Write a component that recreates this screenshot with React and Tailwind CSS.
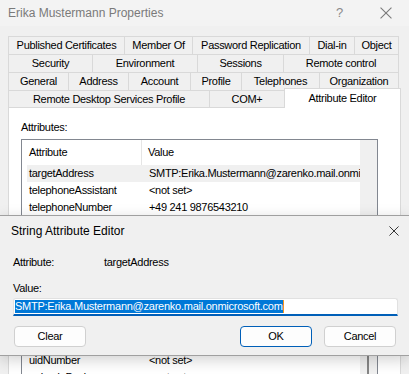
const tabRows = [
  [
    { label: "Published Certificates", w: "w-[116px]" },
    { label: "Member Of", w: "w-[68px]" },
    { label: "Password Replication", w: "w-[117px]" },
    { label: "Dial-in", w: "w-[45px]" },
    { label: "Object", w: "w-[45px]" },
  ],
  [
    { label: "Security", w: "w-[84px]" },
    { label: "Environment", w: "w-[105px]" },
    { label: "Sessions", w: "w-[86px]" },
    { label: "Remote control", w: "w-[116px]" },
  ],
  [
    { label: "General", w: "w-[60px]" },
    { label: "Address", w: "w-[60px]" },
    { label: "Account", w: "w-[62px]" },
    { label: "Profile", w: "w-[51px]" },
    { label: "Telephones", w: "w-[78px]" },
    { label: "Organization", w: "w-[80px]" },
  ],
];

// rows above the dialog
const topRows = [
  ["targetAddress", "SMTP:Erika.Mustermann@zarenko.mail.onmicrosoft.com"],
  ["telephoneAssistant", "<not set>"],
  ["telephoneNumber", "+49 241 9876543210"],
];

// rows below the dialog (the ones in between are covered by it)
const bottomRows = [
  ["uidNumber", "<not set>"],
  ["unicodePwd", "<not set>"],
];

function CloseIcon({ size = 11, color = "#333" }) {
  return (
    <svg width={size} height={size} viewBox="0 0 11 11" fill="none">
      <path d="M0.5 0.5L10.5 10.5M10.5 0.5L0.5 10.5" stroke={color} strokeWidth="1" />
    </svg>
  );
}

function Row({ name, value, selected }) {
  return (
    <div
      className={`ml-[5px] flex h-[17px] w-[333px] items-center overflow-hidden whitespace-nowrap ${
        selected ? "bg-[#f0f0f0]" : ""
      }`}
    >
      <div className="w-[122px] shrink-0 pl-[2px]">{name}</div>
      <div>{value}</div>
    </div>
  );
}

export default function App() {
  return (
    <div className="relative h-[374px] w-[409px] overflow-hidden bg-[#f0f0f0] font-['Liberation_Sans',Arial,sans-serif] text-[11px] tracking-[-0.3px] text-black">
      {/* Window title */}
      <div className="flex h-[26px] items-center bg-[#f3f3f3] pl-[8px]">
        <span className="text-[12px] tracking-normal text-[#7a7a7a]">Erika Mustermann Properties</span>
        <span className="ml-auto text-[13px] font-light text-[#8a8a8a]">?</span>
        <span className="ml-[37px] mr-[17px] flex">
          <CloseIcon size={12} color="#7a7a7a" />
        </span>
      </div>

      {/* Tabs */}
      <div className="mt-[10px] px-[8px]">
        {tabRows.map((row, i) => (
          <div key={i} className="flex">
            {row.map((t, j) => (
              <div
                key={t.label}
                className={`flex h-[18px] items-center justify-center border-l border-t border-[#d9d9d9] ${t.w} ${
                  j === row.length - 1 ? "border-r" : ""
                }`}
              >
                {t.label}
              </div>
            ))}
          </div>
        ))}
        <div className="-mt-[2px] flex h-[20px] items-end">
          <div className="flex h-[18px] w-[201px] items-center justify-center border-b border-l border-t border-[#d9d9d9]">
            Remote Desktop Services Profile
          </div>
          <div className="flex h-[18px] w-[75px] items-center justify-center border-b border-l border-t border-[#d9d9d9]">
            COM+
          </div>
          <div className="flex h-[20px] w-[117px] items-center justify-center border-x border-t border-[#d9d9d9] bg-white">
            Attribute Editor
          </div>
        </div>
      </div>

      {/* Tab page */}
      <div className="mx-[8px] h-[266px] w-[393px] border-x border-[#d9d9d9] bg-white pl-[12px] pt-[12px]">
        <div className="leading-[14px]">Attributes:</div>
        <div className="mt-[5px] flex h-[300px] w-[357px] border border-[#828790]">
          <div className="w-[338px]">
            <div className="flex h-[25px]">
              <div className="flex w-[120px] items-center border-r border-[#e5e5e5] pl-[7px]">Attribute</div>
              <div className="flex items-center pl-[6px]">Value</div>
            </div>
            {topRows.map(([name, value], i) => (
              <Row key={name} name={name} value={value} selected={i === 0} />
            ))}
            <div className="h-[136px]" />
            {bottomRows.map(([name, value]) => (
              <Row key={name} name={name} value={value} />
            ))}
          </div>
          <div className="w-[17px] bg-[#f0f0f0]">
            <div className="ml-[7px] mt-[170px] h-[140px] w-[2px] rounded-full bg-[#858585]" />
          </div>
        </div>
      </div>

      {/* String Attribute Editor dialog */}
      <div className="absolute inset-x-0 top-[215px] h-[141px] border-y border-[#a0a0a0] bg-[#f0f0f0] shadow-[0_4px_14px_rgba(0,0,0,0.18)]">
        <div className="flex h-[30px] items-center pl-[11px]">
          <span className="text-[12px] tracking-normal">String Attribute Editor</span>
          <span className="ml-auto mr-[10px] flex">
            <CloseIcon size={10} color="#222" />
          </span>
        </div>
        <div className="px-[13px] leading-[15px]">
          <div className="mt-[9px] flex">
            <span className="w-[91px]">Attribute:</span>
            <span>targetAddress</span>
          </div>
          <div className="mt-[11px]">Value:</div>
          <div className="mt-[2px] flex h-[18px] w-[385px] items-center rounded-t-[3px] border border-b-2 border-[#e1e1e1] border-b-[#005fb8] bg-white pl-[1px]">
            <span className="flex h-[13px] items-center bg-[#0078d7] tracking-[-0.25px] text-white">
              SMTP:Erika.Mustermann@zarenko.mail.onmicrosoft.com
            </span>
            <span className="h-[13px] w-[1px] bg-[#f7941d]" />
          </div>
          <div className="mt-[10px] flex">
            <button className="ml-[1px] h-[21px] w-[72px] rounded-[4px] border border-[#d0d0d0] bg-[#fdfdfd]">
              Clear
            </button>
            <button className="ml-auto h-[21px] w-[72px] rounded-[4px] border border-[#005fb8] bg-[#fdfdfd]">
              OK
            </button>
            <button className="ml-[12px] h-[21px] w-[72px] rounded-[4px] border border-[#d0d0d0] bg-[#fdfdfd]">
              Cancel
            </button>
          </div>
        </div>
      </div>
    </div>
  );
}
